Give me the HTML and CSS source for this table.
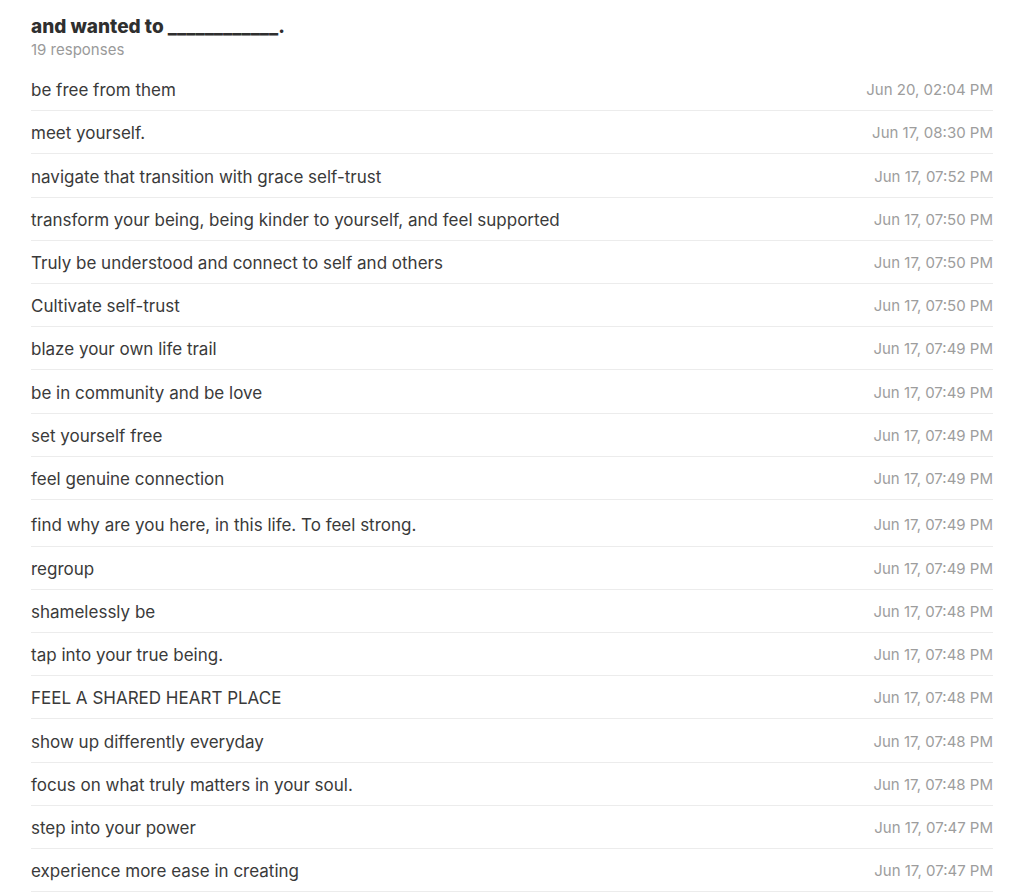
FILE: index.html
```html
<!DOCTYPE html>
<html lang="en">
<head>
<meta charset="utf-8">
<title>Responses</title>
<link rel="stylesheet" href="styles.css">
</head>
<body>
<div class="panel">
  <div class="header">
    <h2 class="title">and wanted to ____________.</h2>
    <div class="count">19 responses</div>
  </div>
  <ul class="list">
    <li class="row"><span class="text">be free from them</span><span class="time">Jun 20, 02:04 PM</span></li>
    <li class="row"><span class="text">meet yourself.</span><span class="time">Jun 17, 08:30 PM</span></li>
    <li class="row"><span class="text">navigate that transition with grace self-trust</span><span class="time">Jun 17, 07:52 PM</span></li>
    <li class="row"><span class="text">transform your being, being kinder to yourself, and feel supported</span><span class="time">Jun 17, 07:50 PM</span></li>
    <li class="row"><span class="text">Truly be understood and connect to self and others</span><span class="time">Jun 17, 07:50 PM</span></li>
    <li class="row"><span class="text">Cultivate self-trust</span><span class="time">Jun 17, 07:50 PM</span></li>
    <li class="row"><span class="text">blaze your own life trail</span><span class="time">Jun 17, 07:49 PM</span></li>
    <li class="row"><span class="text">be in community and be love</span><span class="time">Jun 17, 07:49 PM</span></li>
    <li class="row"><span class="text">set yourself free</span><span class="time">Jun 17, 07:49 PM</span></li>
    <li class="row"><span class="text">feel genuine connection</span><span class="time">Jun 17, 07:49 PM</span></li>
    <li class="row row-tall"><span class="text">find why are you here, in this life. To feel strong.</span><span class="time">Jun 17, 07:49 PM</span></li>
    <li class="row"><span class="text">regroup</span><span class="time">Jun 17, 07:49 PM</span></li>
    <li class="row"><span class="text">shamelessly be</span><span class="time">Jun 17, 07:48 PM</span></li>
    <li class="row"><span class="text">tap into your true being.</span><span class="time">Jun 17, 07:48 PM</span></li>
    <li class="row"><span class="text">FEEL A SHARED HEART PLACE</span><span class="time">Jun 17, 07:48 PM</span></li>
    <li class="row"><span class="text">show up differently everyday</span><span class="time">Jun 17, 07:48 PM</span></li>
    <li class="row"><span class="text">focus on what truly matters in your soul.</span><span class="time">Jun 17, 07:48 PM</span></li>
    <li class="row"><span class="text">step into your power</span><span class="time">Jun 17, 07:47 PM</span></li>
    <li class="row"><span class="text">experience more ease in creating</span><span class="time">Jun 17, 07:47 PM</span></li>
  </ul>
</div>
</body>
</html>
```

FILE: styles.css
```css
html, body {
  margin: 0;
  padding: 0;
  background: #ffffff;
}

body {
  font-family: Inter, "Noto Sans", "Liberation Sans", sans-serif;
  color: #3a3a3a;
}

.panel {
  width: 962px;
  margin-left: 31px;
  padding-top: 15px;
}

.header {
  display: flex;
  flex-direction: column;
  gap: 1px;
  margin-bottom: 8px;
}

.title {
  margin: 0;
  font-size: 19px;
  line-height: 24px;
  font-weight: 800;
  color: #2f2f2f;
}

.count {
  font-size: 15px;
  line-height: 20px;
  color: #9a9a9a;
}

.list {
  list-style: none;
  margin: 0;
  padding: 0;
}

.row {
  display: flex;
  justify-content: space-between;
  align-items: center;
  padding: 10.2px 0 8px;
  border-bottom: 1px solid #ececec;
  font-size: 17px;
  line-height: 24px;
}

.row-tall {
  padding-top: 12.8px;
  padding-bottom: 8.9px;
}

.text {
  color: #3a3a3a;
}

.time {
  font-size: 15px;
  color: #9d9d9d;
}
```
